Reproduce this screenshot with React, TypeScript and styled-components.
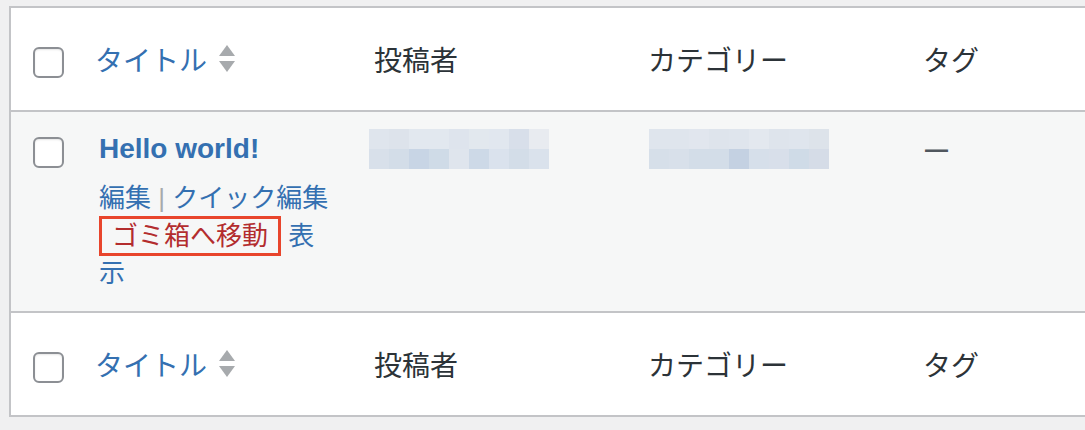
import { createGlobalStyle, styled } from "styled-components";

const GlobalStyle = createGlobalStyle`
    html, body {
        margin: 0;
        padding: 0;
        background: #f0f0f1;
        overflow: hidden;
    }
    body {
        font-family: "Liberation Sans", "Noto Sans CJK JP", sans-serif;
        color: #2c3338;
    }
`

const authorTiles = [
    ["#dfe5ed", "#dde3eb", "#e2e8ef", "#e2e8ef", "#dee4ed", "#e2e8ee", "#e1e7ef", "#d8dfea", "#e8ebf0"],
    ["#d8e0ea", "#d3dde8", "#c8d5e5", "#cfdbe7", "#dfe5ed", "#cdd9e7", "#dae2ed", "#d3dde8", "#dae2ec"],
];

const categoryTiles = [
    ["#dfe5ed", "#dfe5ed", "#e1e6ee", "#dee4ec", "#dfe5ed", "#e3e8ef", "#dee4ec", "#dfe5ed", "#dde3ea"],
    ["#d6dfe9", "#d8e0ea", "#d3dde8", "#d3dde8", "#c4d1e2", "#d6dfea", "#d8dfea", "#cfdbe7", "#d5dce7"],
];

const SortIcon = () => (
    <svg width="16" height="28" viewBox="0 0 16 28">
        <path d="M8 0 L16 11 L0 11 Z" fill="#a7aaad" />
        <path d="M0 16 L16 16 L8 27 Z" fill="#a7aaad" />
    </svg>
);

const Mosaic = ({ tiles }: { tiles: string[][] }) => (
    <svg width="180" height="40" viewBox="0 0 180 40">
        {tiles.map((row, r) =>
            row.map((c, i) => (
                <rect key={`${r}-${i}`} x={i * 20} y={r * 20} width="20" height="20" fill={c} />
            ))
        )}
    </svg>
);

const HeadRow = ({ last }: { last?: boolean }) => (
    <Row $kind="head" $last={last}>
        <CheckCell>
            <Check type="checkbox" $shift />
        </CheckCell>
        <HeadCell $pad={16}>
            <SortLink>
                タイトル
                <SortIcon />
            </SortLink>
        </HeadCell>
        <HeadCell $pad={22}>投稿者</HeadCell>
        <HeadCell $pad={16}>カテゴリー</HeadCell>
        <HeadCell $pad={16}>タグ</HeadCell>
    </Row>
);

export default function App() {
    return (
        <>
            <GlobalStyle />
            <Table>
                <HeadRow />
                <Row $kind="body">
                    <CheckCell $top={25}>
                        <Check type="checkbox" />
                    </CheckCell>
                    <TitleCell>
                        <PostTitle>Hello world!</PostTitle>
                        <RowActions>
                            <Action>編集</Action> <Sep>|</Sep> <Action>クイック編集</Action>
                            <br />
                            <Trash>ゴミ箱へ移動</Trash> <Action>表示</Action>
                        </RowActions>
                    </TitleCell>
                    <BodyCell>
                        <Mosaic tiles={authorTiles} />
                    </BodyCell>
                    <BodyCell>
                        <Mosaic tiles={categoryTiles} />
                    </BodyCell>
                    <TagCell>—</TagCell>
                </Row>
                <HeadRow last />
            </Table>
        </>
    );
}

const Table = styled.div`
    margin: 6px 0 0 9px;
    width: 1100px;
    background: #fff;
    border: 2px solid #c3c4c7;
    border-right: none;
`

const Row = styled.div<{ $kind: "head" | "body"; $last?: boolean }>`
    display: grid;
    grid-template-columns: 68px 273px 280px 275px 1fr;
    height: ${(p) => (p.$kind === "head" ? "102px" : "199px")};
    background: ${(p) => (p.$kind === "head" ? "#fff" : "#f6f7f7")};
    border-bottom: ${(p) => (p.$last ? "none" : "2px solid #c3c4c7")};
    align-items: ${(p) => (p.$kind === "head" ? "center" : "start")};
`

const CheckCell = styled.div<{ $top?: number }>`
    padding-left: 22px;
    padding-top: ${(p) => p.$top ?? 0}px;
    display: flex;
`

const Check = styled.input<{ $shift?: boolean }>`
    appearance: none;
    margin: ${(p) => (p.$shift ? "7px 0 0" : "0")};
    width: 31px;
    height: 31px;
    box-sizing: border-box;
    border: 2px solid #8c8f94;
    border-radius: 6px;
    background: #fff;
    box-shadow: inset 0 1px 2px rgba(0, 0, 0, 0.1);
`

const HeadCell = styled.div<{ $pad: number }>`
    padding-left: ${(p) => p.$pad}px;
    font-family: "Noto Sans CJK JP", sans-serif;
    font-size: 28px;
    line-height: 40px;
    color: #2c3338;
`

const SortLink = styled.a`
    display: inline-flex;
    align-items: center;
    gap: 12px;
    color: #3470b1;
    text-decoration: none;
`

const TitleCell = styled.div`
    padding: 19px 19px 0 20px;
`

const PostTitle = styled.a`
    display: block;
    font-size: 28px;
    font-weight: 700;
    line-height: 36px;
    color: #3470b1;
`

const RowActions = styled.div`
    margin-top: 13px;
    font-size: 26px;
    line-height: 37.5px;
    color: #3470b1;
`

const Action = styled.a`
    color: #3470b1;
`

const Sep = styled.span`
    color: #a7aaad;
`

const Trash = styled.a`
    color: #b32d2e;
    border: 3px solid #e8452c;
    padding: 2px 10px;
`

const BodyCell = styled.div`
    padding: 17px 0 0 17px;
    line-height: 0;
`

const TagCell = styled.div`
    padding: 19px 0 0 18px;
    font-size: 23px;
    font-weight: 700;
    line-height: 36px;
    color: #50575e;
`
